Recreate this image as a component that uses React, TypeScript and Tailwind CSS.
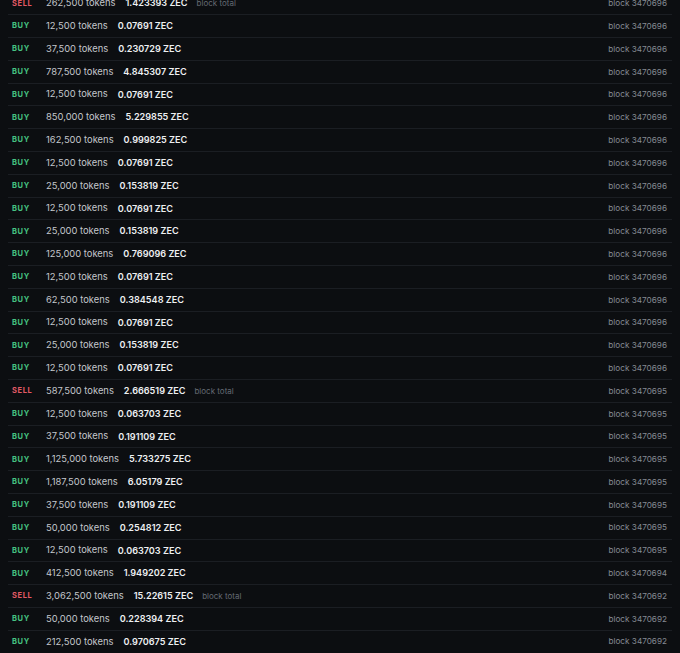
const rows: [string, string, string, boolean, string][] = [
  ["SELL", "262,500", "1.423393", true, "3470696"],
  ["BUY", "12,500", "0.07691", false, "3470696"],
  ["BUY", "37,500", "0.230729", false, "3470696"],
  ["BUY", "787,500", "4.845307", false, "3470696"],
  ["BUY", "12,500", "0.07691", false, "3470696"],
  ["BUY", "850,000", "5.229855", false, "3470696"],
  ["BUY", "162,500", "0.999825", false, "3470696"],
  ["BUY", "12,500", "0.07691", false, "3470696"],
  ["BUY", "25,000", "0.153819", false, "3470696"],
  ["BUY", "12,500", "0.07691", false, "3470696"],
  ["BUY", "25,000", "0.153819", false, "3470696"],
  ["BUY", "125,000", "0.769096", false, "3470696"],
  ["BUY", "12,500", "0.07691", false, "3470696"],
  ["BUY", "62,500", "0.384548", false, "3470696"],
  ["BUY", "12,500", "0.07691", false, "3470696"],
  ["BUY", "25,000", "0.153819", false, "3470696"],
  ["BUY", "12,500", "0.07691", false, "3470696"],
  ["SELL", "587,500", "2.666519", true, "3470695"],
  ["BUY", "12,500", "0.063703", false, "3470695"],
  ["BUY", "37,500", "0.191109", false, "3470695"],
  ["BUY", "1,125,000", "5.733275", false, "3470695"],
  ["BUY", "1,187,500", "6.05179", false, "3470695"],
  ["BUY", "37,500", "0.191109", false, "3470695"],
  ["BUY", "50,000", "0.254812", false, "3470695"],
  ["BUY", "12,500", "0.063703", false, "3470695"],
  ["BUY", "412,500", "1.949202", false, "3470694"],
  ["SELL", "3,062,500", "15.22615", true, "3470692"],
  ["BUY", "50,000", "0.228394", false, "3470692"],
  ["BUY", "212,500", "0.970675", false, "3470692"],
];

export default function App() {
  return (
    <div className="h-[653px] w-[680px] overflow-hidden bg-[#0c0e11] px-2 font-['Inter',sans-serif]">
      <div className="-mt-[7.6px]">
        {rows.map(([side, tokens, zec, total, block], i) => (
          <div
            key={i}
            className="flex h-[22.8px] items-center border-b border-[#1b1e23] pl-1 pr-[5px]"
          >
            <span
              className={
                "w-[34px] text-[7.5px] font-bold tracking-[0.08em] " +
                (side === "SELL" ? "text-[#e35a66]" : "text-[#46c383]")
              }
            >
              {side}
            </span>
            <span className="text-[9.4px] text-[#c4c7cc]">{tokens} tokens</span>
            <span className="ml-[10px] text-[9.1px] font-semibold text-[#eef0f2]">{zec} ZEC</span>
            {total && <span className="ml-[9px] text-[8px] text-[#646a73]">block total</span>}
            <span className="ml-auto text-[8.2px] text-[#858a93]">block {block}</span>
          </div>
        ))}
      </div>
    </div>
  );
}
